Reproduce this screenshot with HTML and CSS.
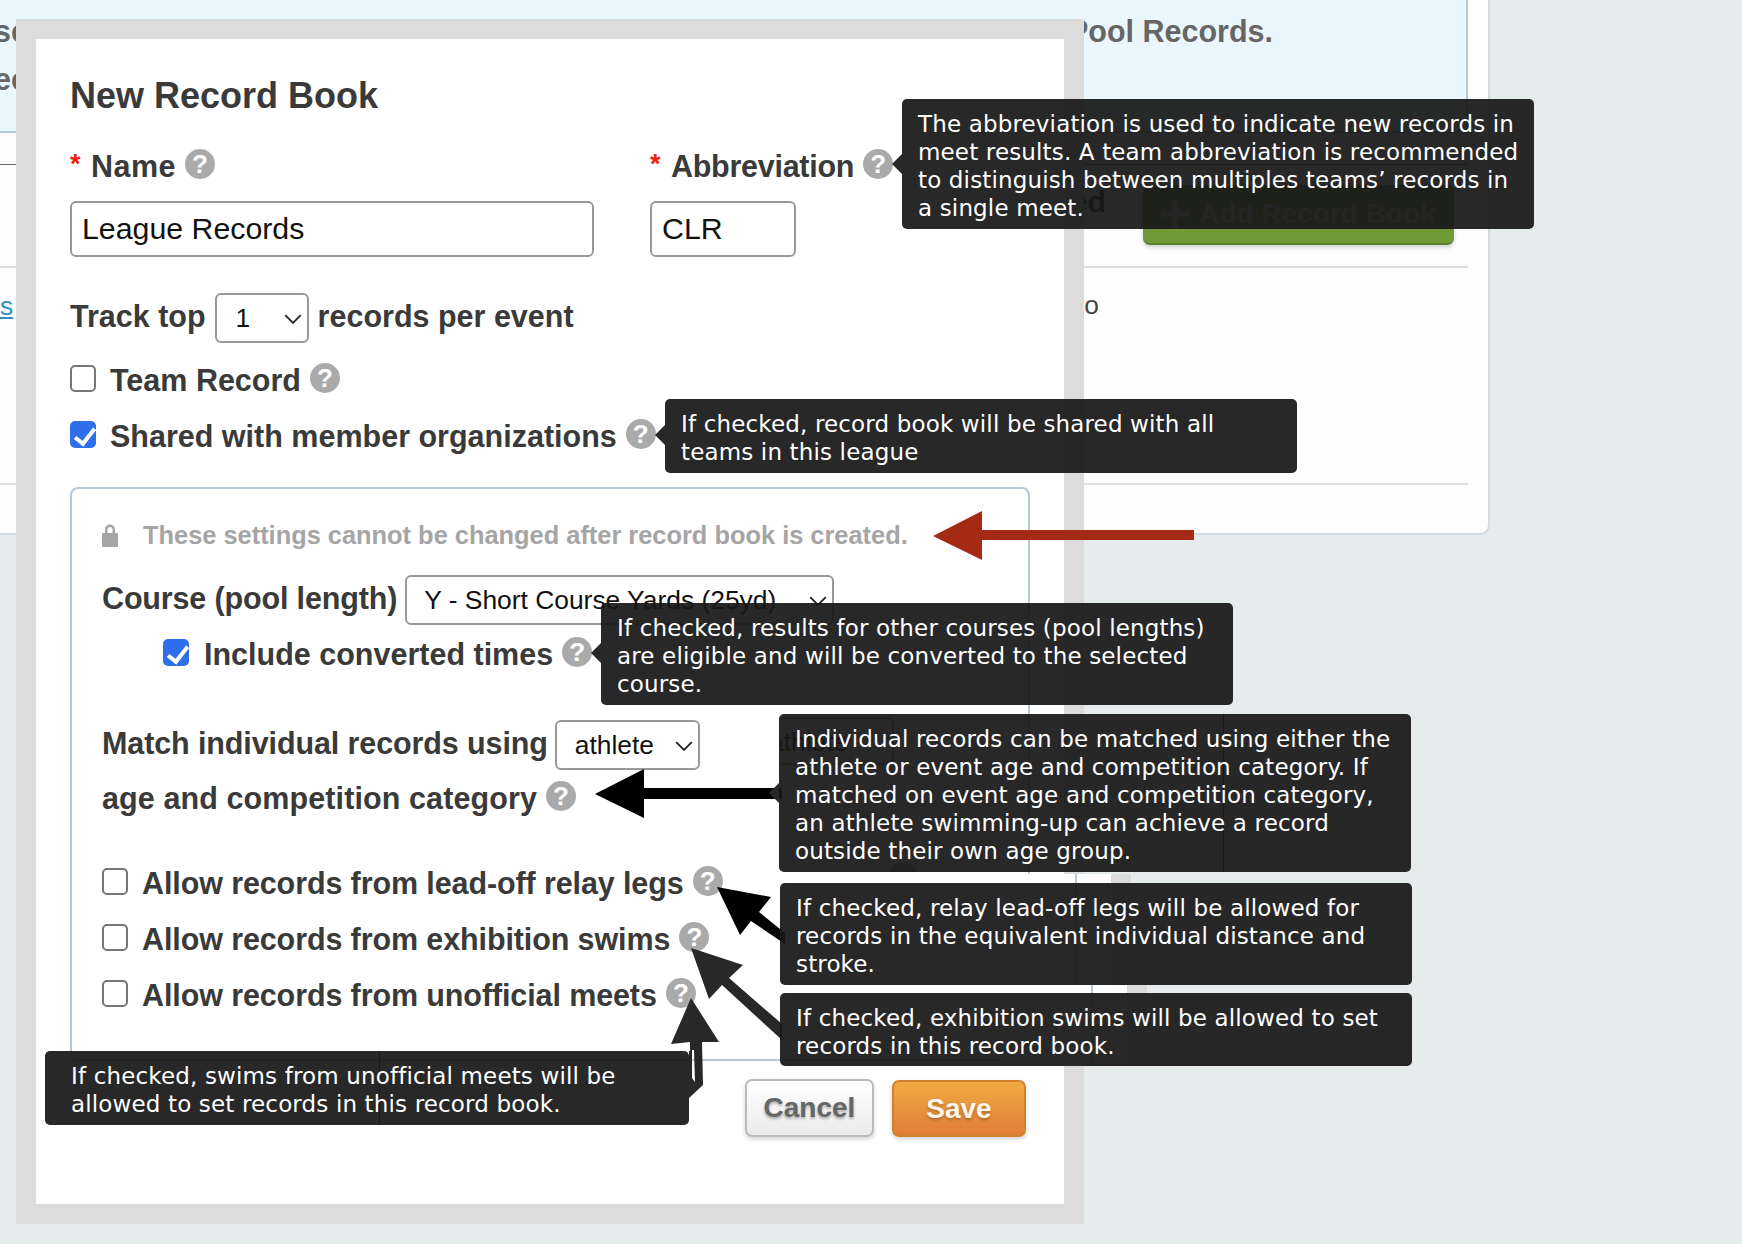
FILE: index.html
```html
<!DOCTYPE html>
<html lang="en">
<head>
<meta charset="utf-8">
<title>New Record Book</title>
<link rel="stylesheet" href="styles.css">
</head>
<body>
<main class="card">
  <section class="intro">
    <p class="intro-line intro-first"><span class="clip-left">se</span><span>Pool Records.</span></p>
    <p class="intro-line"><span class="clip-left">ec</span></p>
  </section>
  <div class="row-head"></div>
  <div class="row-book">
    <span class="row-title">ed</span>
    <button class="add-btn" type="button"><svg class="add-plus" viewBox="0 0 28 28"><path d="M11 0h6v11h11v6H17v11h-6V17H0v-6h11z"/></svg>Add Record Book</button>
  </div>
  <div class="row-list">
    <a class="book-link" href="#">s</a>
    <span class="book-count">o</span>
  </div>
</main>

<form class="modal">
  <h1 class="modal-title">New Record Book</h1>

  <div class="fields">
    <div class="field field-name">
      <div class="label"><span class="req">*</span>Name<span class="help">?</span></div>
      <input class="text-input" type="text" value="League Records">
    </div>
    <div class="field field-abbr">
      <div class="label"><span class="req">*</span>Abbreviation<span class="help">?</span></div>
      <input class="text-input" type="text" value="CLR">
    </div>
  </div>

  <div class="label track-row">Track top
    <span class="select-wrap select-top"><select class="select"><option>1</option></select><svg class="chev" viewBox="0 0 16 9"><path d="M1 1l7 7 7-7"/></svg></span>
    records per event</div>

  <label class="label check-row team-row"><input class="check" type="checkbox">Team Record<span class="help">?</span></label>
  <label class="label check-row shared-row"><input class="check" type="checkbox" checked>Shared with member organizations<span class="help">?</span></label>

  <fieldset class="locked">
    <div class="lock-note">
      <svg class="lock" viewBox="0 0 16 24"><path d="M3 10V6.500a5 5 0 0 1 10 0V10h2a1 1 0 0 1 1 1v12a1 1 0 0 1-1 1H1a1 1 0 0 1-1-1V11a1 1 0 0 1 1-1zm2.500 0h5V6.500a2.500 2.500 0 0 0-5 0z"/></svg>
      <span>These settings cannot be changed after record book is created.</span>
    </div>
    <div class="label course-row">Course (pool length)
      <span class="select-wrap select-course"><select class="select"><option>Y - Short Course Yards (25yd)</option></select><svg class="chev" viewBox="0 0 16 9"><path d="M1 1l7 7 7-7"/></svg></span>
    </div>
    <label class="label check-row convert-row"><input class="check" type="checkbox" checked>Include converted times<span class="help">?</span></label>
    <div class="label match-row">Match individual records using
      <span class="select-wrap select-match"><select class="select"><option>athlete</option></select><svg class="chev" viewBox="0 0 16 9"><path d="M1 1l7 7 7-7"/></svg></span>
    </div>
    <div class="label age-row">age and competition category<span class="help">?</span></div>
    <label class="label check-row allow-row allow-first"><input class="check" type="checkbox">Allow records from lead-off relay legs<span class="help">?</span></label>
    <label class="label check-row allow-row"><input class="check" type="checkbox">Allow records from exhibition swims<span class="help">?</span></label>
    <label class="label check-row allow-row"><input class="check" type="checkbox">Allow records from unofficial meets<span class="help">?</span></label>
  </fieldset>

  <div class="actions">
    <button class="btn btn-cancel" type="button">Cancel</button>
    <button class="btn btn-save" type="button">Save</button>
  </div>
</form>

<div class="patch patch-a"></div>
<div class="patch patch-b"></div>
<div class="ghost-select">athlete</div>
<div class="ghost-help"></div>
<div class="seam seam-match"></div>
<div class="seam seam-unoff"></div>

<svg class="arrows" viewBox="0 0 1742 1244" aria-hidden="true">
  <polygon class="a-red" points="933,536 982,511 982,530 1194,530 1194,540 982,540 982,560"/>
  <polygon class="a-black" points="595,794 644,769 644,788 782,788 782,799 644,799 644,818"/>
  <polygon class="a-black" points="717,887 771,897 759,912 785,933 785,944 751,921 740,935"/>
  <polygon class="a-dark" points="691,948 743,965 729,978 782,1024 782,1040 722,985 709,999"/>
  <path class="a-dark" fill-rule="evenodd" d="M691,998 L719,1042 L702,1042 L703,1085 L689,1098 L689,1051 L690,1051 L690,1042 L671,1044 Z M692,1050 L692,1078 L695,1082 L694,1050 Z"/>
</svg>

<div class="tip tip-abbr">The abbreviation is used to indicate new records in<br>meet results. A team abbreviation is recommended<br>to distinguish between multiples teams’ records in<br>a single meet.</div>
<div class="tip tip-shared">If checked, record book will be shared with all<br>teams in this league</div>
<div class="tip tip-convert">If checked, results for other courses (pool lengths)<br>are eligible and will be converted to the selected<br>course.</div>
<div class="tip tip-match">Individual records can be matched using either the<br>athlete or event age and competition category. If<br>matched on event age and competition category,<br>an athlete swimming-up can achieve a record<br>outside their own age group.</div>
<div class="tip tip-relay">If checked, relay lead-off legs will be allowed for<br>records in the equivalent individual distance and<br>stroke.</div>
<div class="tip tip-exhib">If checked, exhibition swims will be allowed to set<br>records in this record book.</div>
<div class="tip tip-unoff">If checked, swims from unofficial meets will be<br>allowed to set records in this record book.</div>
</body>
</html>
```

FILE: styles.css
```css
* { box-sizing: border-box; }
html, body { margin: 0; padding: 0; }
body {
  position: relative;
  width: 1742px;
  height: 1244px;
  overflow: hidden;
  background: #e6ecec;
  font-family: "Liberation Sans", Arial, sans-serif;
  color: #3a3a3a;
}

/* page behind the dialog */
.card {
  width: 1490px;
  height: 535px;
  padding-right: 20px;
  background: #fdfdfd;
  border-right: 2px solid #d3dce3;
  border-bottom: 2px solid #d3dce3;
  border-bottom-right-radius: 10px;
}
.intro {
  height: 133px;
  padding-top: 10px;
  background: #ebf7ff;
  border-right: 2px solid #b7c8d8;
  border-bottom: 2px solid #b7c8d8;
  font-size: 30.500px;
  font-weight: 700;
  color: #666;
}
.intro-line { margin: 0; height: 48px; line-height: 42px; }
.intro-first { display: flex; justify-content: space-between; padding-right: 193px; }
.clip-left { margin-left: -6px; }
.row-head { height: 32px; border-bottom: 1px solid #666; }
.row-book {
  display: flex;
  align-items: center;
  justify-content: flex-end;
  height: 103px;
  padding-right: 14px;
  border-bottom: 2px solid #ddd;
}
.row-title { margin: 0 37px 28px 0; font-size: 30.400px; font-weight: 700; color: #222; }
.add-btn {
  display: flex;
  align-items: center;
  justify-content: center;
  gap: 10px;
  width: 311px;
  height: 60px;
  margin-bottom: 2px;
  padding: 0;
  background: #6f9a37;
  border: 0;
  border-bottom: 2px solid #5b8230;
  border-radius: 7px;
  box-shadow: 0 2px 4px rgba(0,0,0,.2);
  font: 700 28px "Liberation Sans", Arial, sans-serif;
  color: #bdbdbd;
}
.add-plus { width: 28px; height: 28px; fill: #bdbdbd; }
.row-list {
  display: flex;
  justify-content: space-between;
  height: 217px;
  padding-top: 22px;
  padding-right: 369px;
  border-bottom: 2px solid #ddd;
  font-size: 26.400px;
}
.book-link { margin-top: 1px; color: #2f8fc4; text-decoration: underline; }
.book-count { color: #444; }

/* dialog */
.modal {
  position: absolute;
  left: 16px;
  top: 19px;
  width: 1068px;
  height: 1205px;
  padding: 37px 34px 0;
  background: #fff;
  border: 20px solid #dcdcdc;
}
.modal-title { margin: 0 0 32px; font-size: 36px; line-height: 40px; font-weight: 700; color: #3a3a3a; }
.fields { display: flex; gap: 56px; }
.field { display: flex; flex-direction: column; gap: 17px; }
.field-name { width: 524px; }
.field-abbr { width: 146px; }
.field-name .label { letter-spacing: 0.500px; }
.field-abbr .label { letter-spacing: -0.270px; }
.label {
  display: flex;
  align-items: center;
  height: 36px;
  font-size: 30.500px;
  font-weight: 700;
  color: #3a3a3a;
  white-space: nowrap;
}
.req { flex: none; width: 21px; color: #f01c10; font-size: 27px; margin-top: -4px; }
.help {
  flex: none;
  width: 30px;
  height: 30px;
  margin: -4px 0 0 9px;
  border-radius: 50%;
  background: #aaa;
  color: #fff;
  font-size: 26px;
  line-height: 30px;
  text-align: center;
}
.text-input {
  width: 100%;
  height: 56px;
  padding: 0 10px;
  border: 2px solid #999;
  border-radius: 6px;
  background: #fff;
  font: 30.300px "Liberation Sans", Arial, sans-serif;
  color: #111;
}
.track-row { margin-top: 41px; gap: 9px; }
.select-wrap { position: relative; display: block; flex: none; }
.select {
  display: block;
  width: 100%;
  height: 100%;
  appearance: none;
  padding: 0 0 0 17px;
  border: 2px solid #999;
  border-radius: 6px;
  background: #fff;
  font: 26.400px "Liberation Sans", Arial, sans-serif;
  color: #111;
}
.chev { position: absolute; right: 7px; top: 50%; width: 18px; height: 10px; margin-top: -4px; fill: none; stroke: #222; stroke-width: 1.600; }
.select-top { width: 94px; height: 50px; margin-top: 4px; }
.select-top .select { padding-left: 19px; }
.select-course { width: 429px; height: 50px; margin-top: 4px; }
.select-match { width: 145px; height: 50px; margin-top: 4px; }
.select-match .select { padding-left: 18px; }
.check-row { gap: 14px; }
.check-row .help { margin-left: -5px; }
.check {
  flex: none;
  position: relative;
  width: 26px;
  height: 27px;
  margin: -3px 0 0;
  appearance: none;
  background: #fff;
  border: 2px solid #777;
  border-radius: 5px;
}
.check:checked { background: #2f70ea; border-color: #2f70ea; }
.check:checked::after {
  content: "";
  position: absolute;
  left: 7px;
  top: 1px;
  width: 8px;
  height: 17px;
  border-right: 4px solid #fff;
  border-bottom: 4px solid #fff;
  transform: rotate(38deg);
}
.team-row { margin-top: 28px; }
.shared-row { margin-top: 20px; }

.locked {
  margin: 33px 0 0;
  padding: 0 0 0 30px;
  width: 960px;
  height: 574px;
  border: 2px solid #b7c8d8;
  border-radius: 8px;
}
.lock-note {
  display: flex;
  align-items: center;
  height: 36px;
  margin-top: 28px;
  gap: 25px;
  font-size: 25.400px;
  font-weight: 700;
  color: #a5a5a5;
}
.lock { width: 16px; height: 24px; fill: #a5a5a5; }
.course-row { gap: 8px; margin-top: 20px; height: 50px; letter-spacing: -0.150px; }
.convert-row { margin-top: 13px; padding-left: 61px; gap: 15px; }
.convert-row .help { margin-left: -6px; }
.match-row { gap: 7px; margin-top: 46px; height: 50px; letter-spacing: -0.110px; }
.select-course .select, .select-match .select { letter-spacing: 0; }
.age-row { margin-top: 12px; letter-spacing: 0.100px; }
.allow-row { margin-top: 20px; letter-spacing: -0.110px; }
.allow-first { margin-top: 49px; }
.actions { display: flex; justify-content: flex-end; align-items: flex-start; gap: 18px; margin-top: 18px; padding-right: 4px; }
.btn {
  height: 58px;
  border-radius: 7px;
  font: 700 28px "Liberation Sans", Arial, sans-serif;
  box-shadow: 0 2px 4px rgba(0,0,0,.18);
}
.btn-cancel {
  width: 129px;
  background: linear-gradient(#fff, #ebebeb);
  border: 2px solid #bbb;
  color: #666;
  text-shadow: 0 2px 3px rgba(0,0,0,.3);
}
.btn-save {
  width: 134px;
  height: 57px;
  margin-top: 1px;
  background: linear-gradient(#efaa42, #e07e36);
  border: 2px solid #d0812f;
  color: #fff6ec;
  text-shadow: 0 2px 3px rgba(0,0,0,.25);
}

/* pasted screenshot seams under the tooltips */
.patch { position: absolute; background: #fff; border-right: 20px solid #dcdcdc; }
.patch::before { content: ""; position: absolute; top: 0; bottom: 0; width: 2px; background: #b7c8d8; }
.patch-a { left: 1000px; top: 874px; width: 131px; height: 111px; }
.patch-a::before { left: 75px; }
.patch-b { left: 1000px; top: 985px; width: 147px; height: 81px; }
.patch-b::before { left: 91px; }
.ghost-select {
  position: absolute;
  left: 780px;
  top: 717px;
  width: 114px;
  height: 48px;
  overflow: hidden;
  text-indent: -11px;
  background: #fff;
  border: 2px solid #999;
  border-left: 0;
  border-radius: 0 6px 6px 0;
  font-size: 26.400px;
  line-height: 46px;
  color: #111;
}
.ghost-help { position: absolute; left: 888px; top: 862px; width: 30px; height: 30px; border-radius: 50%; background: #aaa; clip-path: inset(0 0 20px 0); }
.seam { position: absolute; width: 1px; background: #333; }
.seam-match { left: 1223px; top: 714px; height: 158px; }
.seam-unoff { left: 379px; top: 1051px; height: 74px; }

.arrows { position: absolute; left: 0; top: 0; width: 1742px; height: 1244px; pointer-events: none; }
.a-red { fill: #a52a16; }
.a-black { fill: #000; }
.a-dark { fill: #282828; }

/* tooltips */
.tip {
  position: absolute;
  width: 632px;
  padding: 11px 16px 0;
  background: rgba(24,24,24,.93);
  border-radius: 5px;
  font-family: "DejaVu Sans", sans-serif;
  font-size: 23px;
  letter-spacing: 0.150px;
  line-height: 28px;
  color: #fff;
  white-space: nowrap;
}
.tip::before {
  content: "";
  position: absolute;
  left: -10px;
  top: var(--caret, 50%);
  margin-top: -10px;
  border-style: solid;
  border-width: 10px 10px 10px 0;
  border-color: transparent #282828 transparent transparent;
}
.tip-abbr { left: 902px; top: 99px; height: 130px; --caret: 65px; }
.tip-shared { left: 665px; top: 399px; height: 74px; --caret: 36px; }
.tip-convert { left: 601px; top: 603px; height: 102px; --caret: 50px; }
.tip-match { left: 779px; top: 714px; height: 158px; --caret: 79px; }
.tip-relay { left: 780px; top: 883px; height: 102px; }
.tip-exhib { left: 780px; top: 993px; height: 73px; }
.tip-unoff { left: 45px; top: 1051px; width: 644px; height: 74px; padding-left: 26px; }
.tip-relay::before, .tip-exhib::before, .tip-unoff::before { display: none; }
```
